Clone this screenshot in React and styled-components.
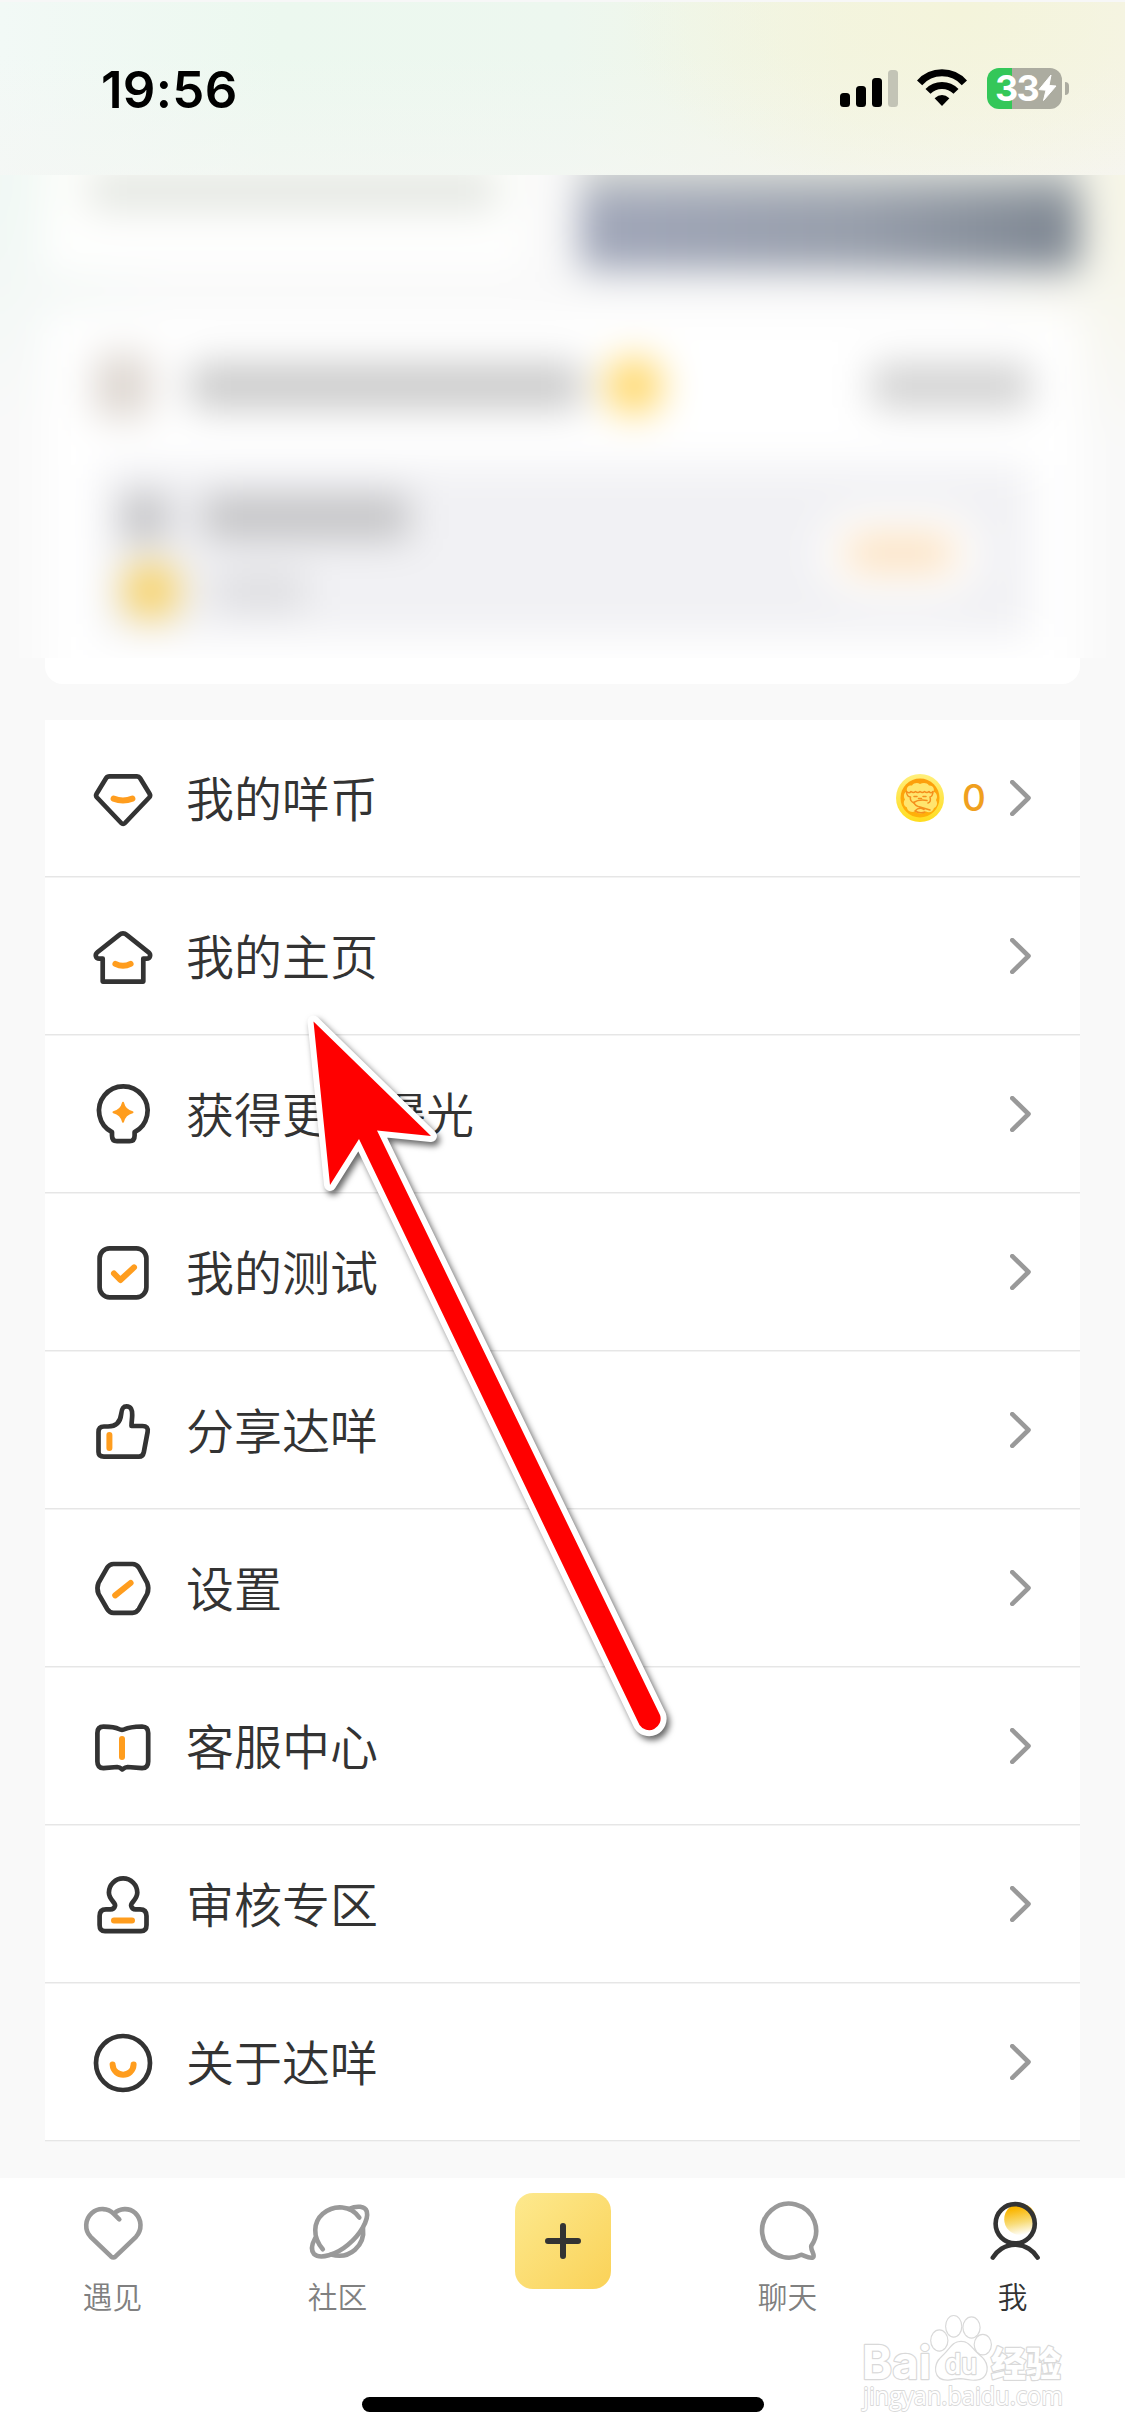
import React from 'react';
import styled, { createGlobalStyle } from 'styled-components';

const palette = {
  ink: '#333333',
  gray: '#999999',
  label: '#808080',
  orange: '#ff9d1e',
  coin: '#f0a01e',
  page: '#f9f9f9',
};

const cjk = "'Noto Sans CJK SC', sans-serif";

const GlobalStyle = createGlobalStyle`
  * {
    box-sizing: border-box;
  }
  body {
    margin: 0;
    background: ${palette.page};
  }
  ul {
    margin: 0;
    padding: 0;
    list-style: none;
  }
  svg {
    display: block;
    flex-shrink: 0;
  }
`;

const Page = styled.div`
  position: relative;
  width: 1125px;
  height: 2436px;
  overflow: hidden;
  display: flex;
  flex-direction: column;
  background: ${palette.page};
  font-family: ${cjk};
  color: ${palette.ink};
`;

/* status bar */

const StatusBar = styled.header`
  height: 175px;
  padding: 2px 56px 0 101px;
  border-top: 2px solid #f7f7f7;
  display: flex;
  align-items: center;
  justify-content: space-between;
  background:
    radial-gradient(ellipse 340px 190px at 960px 10px, #f4f4db 0%, #f4f4db00 100%),
    linear-gradient(180deg, #f6f6f400 30%, #f6f6f490 100%),
    linear-gradient(90deg, #f2f9f6 0%, #ecf8ef 25%, #edf7ef 50%, #f2f5e3 75%, #f6f4e8 100%);
`;

const Clock = styled.div`
  font: 600 51px/60px Inter, sans-serif;
  letter-spacing: 0.3px;
  color: #000;
`;

const StatusIcons = styled.div`
  display: flex;
  align-items: center;
  padding-bottom: 3px;
`;

const Signal = styled.div`
  display: flex;
  align-items: flex-end;
  gap: 6px;
  margin-right: 19px;
`;

const SignalBar = styled.i`
  width: 10px;
  height: ${({ $height }) => $height}px;
  border-radius: 3.5px;
  background: ${({ $off }) => ($off ? '#c3c4b6' : '#000')};
`;

const Battery = styled.div`
  margin-left: 20px;
  width: 75px;
  height: 41px;
  padding-left: 8px;
  border-radius: 12px;
  display: flex;
  align-items: center;
  background: linear-gradient(90deg, #34c759 25px, #acaca0 25px);
  color: #fff;
  font: 700 36px/41px Inter, sans-serif;
  letter-spacing: -1.8px;
`;

const BatteryCap = styled.i`
  width: 4px;
  height: 13px;
  margin-left: 3px;
  border-radius: 0 6px 6px 0;
  background: #acaca0;
`;

/* blurred promo area */

const Frosted = styled.section`
  height: 483px;
  overflow: hidden;
`;

const FrostedInner = styled.div`
  height: 603px;
  margin: -60px;
  padding: 0 105px;
  filter: blur(19px);
  background:
    radial-gradient(ellipse 260px 260px at 0 60px, #eef8f3 0%, #eef8f300 100%),
    radial-gradient(ellipse 260px 280px at 100% 60px, #f5f4e2 0%, #f5f4e200 100%),
    ${palette.page};
`;

const PromoRow = styled.div`
  height: 155px;
  display: flex;
  justify-content: space-between;
`;

const PromoText = styled.div`
  width: 480px;
  padding: 58px 0 0 45px;
  background: linear-gradient(180deg, #fbfdf8, #ffffff);
`;

const PromoBanner = styled.div`
  width: 500px;
  background:
    linear-gradient(180deg, #e4e6df 0 50px, #e4e6df00 88px),
    linear-gradient(90deg, #a0a6b9, #979eab 55%, #7c8590);
`;

const TaskCard = styled.div`
  height: 448px;
  margin-top: 44px;
  padding: 47px 50px 0 50px;
  background: #fff;
`;

const TaskHead = styled.div`
  height: 50px;
  display: flex;
  align-items: center;
`;

const TaskBody = styled.div`
  height: 172px;
  margin: 54px 0 0 6px;
  padding: 15px 50px 0 22px;
  display: flex;
  justify-content: space-between;
  background: #f1f1f4;
`;

const TaskLine = styled.div`
  height: 74px;
  display: flex;
  align-items: center;
  gap: 36px;
`;

const Smudge = styled.div`
  width: ${({ $w }) => $w}px;
  height: ${({ $h }) => $h}px;
  margin-left: ${({ $left }) => $left || 0};
  border-radius: ${({ $round }) => ($round ? '50%' : '4px')};
  background: ${({ $color }) => $color};
`;

const TaskButton = styled.div`
  width: 160px;
  height: 84px;
  margin-top: 31px;
  display: flex;
  align-items: center;
  justify-content: center;
  border-radius: 42px;
  background: #fff;
`;

const CardFoot = styled.div`
  height: 26px;
  margin: 0 45px;
  border-radius: 0 0 18px 18px;
  background: #fff;
`;

/* menu */

const Menu = styled.ul`
  margin: 36px 45px;
`;

const MenuRow = styled.li`
  height: 158px;
  padding: 0 49px 2px 48px;
  display: flex;
  align-items: center;
  background: #fff;
  box-shadow:
    inset 0 -1px #f3f3f3,
    inset 0 -2px #e6e6e6;

  > svg:first-child {
    margin-top: 2px;
  }
`;

const MenuText = styled.span`
  flex: 1;
  margin-left: 33px;
  padding-bottom: 5px;
  font-size: 48px;
  font-weight: 350;
  line-height: 60px;
`;

const CoinCount = styled.span`
  margin: 0 24px 0 18px;
  color: ${palette.coin};
  font: 500 37px/48px Inter, sans-serif;
`;

/* tab bar */

const TabBar = styled.nav`
  height: 258px;
  display: grid;
  grid-template-columns: repeat(5, 1fr);
  grid-template-rows: 219px 15px;
  justify-items: center;
  background: #fff;
`;

const Tab = styled.div`
  padding-top: 25px;
  display: flex;
  flex-direction: column;
  align-items: center;
  gap: 17px;
  font-size: 29.7px;
  line-height: 32px;
  font-weight: 350;
  color: ${({ $active }) => ($active ? palette.ink : palette.label)};
`;

const PlusButton = styled.div`
  width: 96px;
  height: 96px;
  margin-top: 15px;
  border-radius: 18px;
  display: flex;
  align-items: center;
  justify-content: center;
  background: linear-gradient(135deg, #fde98e, #fad258);
`;

const HomeIndicator = styled.div`
  grid-column: 1 / -1;
  width: 402px;
  height: 15px;
  border-radius: 8px;
  background: #000;
`;

/* overlays */

const ArrowSvg = styled.svg`
  position: absolute;
  left: 290px;
  top: 1000px;
  filter: drop-shadow(3px 4px 3px rgba(0, 0, 0, 0.6));
`;

const Watermark = styled.svg`
  position: absolute;
  left: 855px;
  top: 2308px;
`;

const Icon = ({ children, color = palette.ink, width = 4.7 }) => (
  <svg
    width="60"
    height="60"
    viewBox="0 0 60 60"
    fill="none"
    stroke={color}
    strokeWidth={width}
    strokeLinecap="round"
    strokeLinejoin="round"
    overflow="visible"
  >
    {children}
  </svg>
);

const Accent = ({ d }) => <path d={d} stroke={palette.orange} strokeWidth="6" />;

const icons = {
  diamond: (
    <Icon>
      <path d="M16.5 7.3H44Q46 7.3 47 9L56.6 24.7Q57.8 26.6 56.2 28.5L32 54Q30.1 56 28.2 54L4 28.5Q2.4 26.6 3.6 24.7L13.2 9Q14.2 7.3 16.5 7.3Z" />
      <Accent d="M20.6 29.6Q30 33.4 39.4 29.6" />
    </Icon>
  ),
  house: (
    <Icon>
      <path d="M9.7 31.6H6.3C2.6 31.6 1.6 27.6 4.4 25.3L26 8.1C28.5 6 31.5 6 34 8.1L55.6 25.3C58.3 27.6 57.2 31.6 53.7 31.6H50.3V54.6H9.7Z" />
      <Accent d="M22.4 36.9Q30 40.8 37.6 36.9" />
    </Icon>
  ),
  bulb: (
    <Icon>
      <path d="M19 47.2A24.3 24.3 0 1 1 41.6 47.2V50.5Q41.6 56.2 36.5 56.2H24Q19 56.2 19 50.5Z" />
      <path
        d="M30 17.8Q31.8 25.5 39.5 27.3Q31.8 29.1 30 36.8Q28.2 29.1 20.5 27.3Q28.2 25.5 30 17.8Z"
        fill={palette.orange}
        stroke={palette.orange}
        strokeWidth="2"
      />
    </Icon>
  ),
  check: (
    <Icon>
      <rect x="6.6" y="5.3" width="46.8" height="49" rx="10" />
      <Accent d="M21 30.5L27.4 37L41 24.4" />
    </Icon>
  ),
  thumb: (
    <Icon>
      <path d="M5.5 31Q5.5 25.5 11 25.5H15C24 25.5 27.4 20.5 28.2 13C28.7 8 29.7 5.4 33.5 5.4C38 5.4 39.4 9 39.2 14C39.2 18 38.5 21 38.5 25H49.5Q55.7 25 54.6 31L50.8 51.2Q49.9 55.6 46 55.6H11Q5.5 55.6 5.5 51Z" />
      <Accent d="M16.4 34V47" />
    </Icon>
  ),
  hexagon: (
    <Icon>
      <path d="M20.5 5H39.5Q43.5 5 45.9 8.6L54.2 23.8Q56.4 29.3 54.2 34.8L45.9 50Q43.5 53.8 39.5 53.8H20.5Q16.5 53.8 14.2 50L5.5 34.8Q3.3 29.3 5.5 23.8L14.2 8.6Q16.5 5 20.5 5Z" />
      <Accent d="M22.2 36.4L37.6 24" />
    </Icon>
  ),
  book: (
    <Icon>
      <path d="M4.4 16Q4.4 9.7 10.5 9.7C18 9.7 22 10 25.8 12Q29 13.7 32.2 12C36 10 42 9.7 49 9.5Q55.2 9.7 55.2 16V44.5Q55.2 51 49 51.2L34.5 50Q32.5 50 29.3 52.4Q26.5 50 24.3 50L10.5 51.2Q4.4 51 4.4 44.5Z" />
      <Accent d="M29 22V40" />
    </Icon>
  ),
  stamp: (
    <Icon>
      <path d="M22 31C23.4 28 15.9 25 15.9 17.6A14.2 14.2 0 0 1 44.3 17.6C44.3 25 36.8 28 38.2 31Q39.2 34.3 42.5 34.3H47Q53.5 34.3 53.5 41V50Q53.5 56.2 48 56.2H12Q6.6 56.2 6.6 50V41Q6.6 34.3 13 34.3H17.5Q21 34.3 22 31Z" />
      <Accent d="M21 45.4H39" />
    </Icon>
  ),
  smile: (
    <Icon>
      <circle cx="30" cy="30" r="27" />
      <Accent d="M19.6 31.6C20.5 45 39.9 45 40.6 31.6" />
    </Icon>
  ),
};

const Chevron = () => (
  <svg width="21" height="36" viewBox="0 0 21 36" fill="none">
    <path
      d="M2.3 2.2L18.5 18L2.3 33.8"
      stroke={palette.gray}
      strokeWidth="4.6"
      strokeLinecap="round"
      strokeLinejoin="round"
    />
  </svg>
);

const Coin = () => (
  <svg width="48" height="48" viewBox="0 0 48 48">
    <defs>
      <linearGradient id="coinRim" x1="0" y1="0" x2="0" y2="1">
        <stop offset="0" stopColor="#ffef7c" />
        <stop offset="1" stopColor="#ffdc1e" />
      </linearGradient>
      <linearGradient id="coinFace" x1="0" y1="0" x2="0" y2="1">
        <stop offset="0" stopColor="#fc9d0c" />
        <stop offset="1" stopColor="#ffb10a" />
      </linearGradient>
    </defs>
    <circle cx="24" cy="24" r="24" fill="url(#coinRim)" />
    <circle cx="24" cy="24" r="19.5" fill="url(#coinFace)" />
    {/* fleece */}
    <path
      d="M11 17C10 13 13 11 16 11.5C18 8.5 22 8.5 24 10C27 8.5 31 8.5 33 11.5C36 11 39 14 37.5 17.5C41 19 42 23 40 26C42 29 41 33 38 34C37 38 33 39 30 37.5C27 40 21 40 19 37.5C14 39 11 36 11 33.5C7.5 32 7 28 9 25.5C7 22 8 18.5 11 17Z"
      fill="#ffe56e"
    />
    <g fill="none" stroke="#f58f1c" strokeWidth="1.5" strokeLinecap="round" strokeLinejoin="round">
      <path d="M10.5 17.5Q13 20 15 17.5Q17.5 19.5 19.5 17.5Q22 19.5 24 17.5Q26.5 19.5 28.5 17.5Q31 19.5 33 17.5Q35 20 37 17.5" />
      <path d="M10.5 18Q11 23 14.5 23Q13.5 27 18 29M37 18Q36.5 22.5 34 23Q35.5 28 32 29" />
      <path d="M18 22.5H21M27 22.5H30M22.5 24.5H25.5" />
      <path d="M17.5 28.5Q23 25 31 26.5M18 28.5Q19 32 24 33L34 36M19 37Q23 32.5 28 35.5M19 37Q24 40 29 38" />
    </g>
  </svg>
);

const menuItems = [
  { icon: 'diamond', text: '我的咩币', coins: 0 },
  { icon: 'house', text: '我的主页' },
  { icon: 'bulb', text: '获得更多曝光' },
  { icon: 'check', text: '我的测试' },
  { icon: 'thumb', text: '分享达咩' },
  { icon: 'hexagon', text: '设置' },
  { icon: 'book', text: '客服中心' },
  { icon: 'stamp', text: '审核专区' },
  { icon: 'smile', text: '关于达咩' },
];

const Status = () => (
  <StatusBar>
    <Clock>19:56</Clock>
    <StatusIcons>
      <Signal>
        <SignalBar $height={14} />
        <SignalBar $height={21} />
        <SignalBar $height={29} />
        <SignalBar $height={37} $off />
      </Signal>
      <svg width="50" height="38" viewBox="0 0 50 38" fill="none" stroke="#000" strokeWidth="7">
        <path d="M2.6 13.8A30 30 0 0 1 47.4 13.8" />
        <path d="M11 22.4A19.5 19.5 0 0 1 39 22.4" />
        <path d="M17.6 29.2Q25 23 32.4 29.2L25 37Z" fill="#000" stroke="none" />
      </svg>
      <Battery>
        33
        <svg width="19" height="28" viewBox="0 0 19 28" fill="#fff" stroke="#fff" strokeLinejoin="round">
          <path d="M13 1L1 15.6L8 16.2L5.5 26.5L18 12L11 11.4Z" />
        </svg>
      </Battery>
      <BatteryCap />
    </StatusIcons>
  </StatusBar>
);

const Promo = () => (
  <>
    <Frosted>
      <FrostedInner>
        <PromoRow>
          <PromoText>
            <Smudge $w={405} $h={36} $color="#e2e5e0" />
          </PromoText>
          <PromoBanner />
        </PromoRow>
        <TaskCard>
          <TaskHead>
            <Smudge $w={56} $h={64} $color="#ddd6d0" />
            <Smudge $w={392} $h={46} $left="39px" $color="#c9c9c9" />
            <Smudge $w={56} $h={56} $left="24px" $round $color="#ffd45c" />
            <Smudge $w={158} $h={44} $left="auto" $color="#d0d0d0" />
          </TaskHead>
          <TaskBody>
            <div>
              <TaskLine>
                <Smudge $w={44} $h={44} $color="#bdbdbf" />
                <Smudge $w={206} $h={44} $color="#c2c2c4" />
              </TaskLine>
              <TaskLine>
                <Smudge $w={56} $h={56} $round $color="#f8d05c" />
                <Smudge $w={90} $h={36} $color="#dcdcdf" />
              </TaskLine>
            </div>
            <TaskButton>
              <Smudge $w={106} $h={38} $color="#fbe1c0" />
            </TaskButton>
          </TaskBody>
        </TaskCard>
      </FrostedInner>
    </Frosted>
    <CardFoot />
  </>
);

const Tabs = () => (
  <TabBar>
    <Tab>
      <Icon color={palette.gray} width={4.6}>
        <path d="M36.3 16.3L30.8 10.8C25 4.9 15.2 4.4 8.9 10C1.7 16.5 1.4 27 7.6 33.8L28 53.4Q30.3 55.4 32.6 53.4L53 33.8C59.2 27 59 16.5 52.2 10C46 4.6 37 4.9 30.8 10.8" />
      </Icon>
      遇见
    </Tab>
    <Tab>
      <Icon color={palette.gray} width={4.6}>
        <path d="M14.8 46.2C4 33.5 5.5 19 14.8 10.8C26.5 1 43 2.5 51.3 14.5" />
        <path d="M55 25C57.2 42 42 57 23.3 51.5" />
        <path d="M41.2 5.8C49 2.4 57 3 58.8 8.5C61 17 52 32 40 41.8C28 52 12 56.5 6 51C2.6 47 4 41 7 35.5" />
      </Icon>
      社区
    </Tab>
    <PlusButton>
      <svg width="36" height="36" viewBox="0 0 36 36" stroke={palette.ink} strokeWidth="6" strokeLinecap="round">
        <path d="M18 3V33M3 18H33" />
      </svg>
    </PlusButton>
    <Tab>
      <Icon color={palette.gray} width={4.6}>
        <path d="M43.2 51.7A27 27 0 1 1 53.3 42.9C52.2 47 57.8 52.6 55 54.4C52 56 47.5 53.2 43.2 51.7Z" />
      </Icon>
      聊天
    </Tab>
    <Tab $active>
      <Icon width={4.6}>
        <defs>
          <linearGradient id="face" x1="0.4" y1="0" x2="0.6" y2="1">
            <stop offset="0.15" stopColor="#fbb600" />
            <stop offset="0.6" stopColor="#f8dc78" />
            <stop offset="1" stopColor="#ffffff" />
          </linearGradient>
        </defs>
        <circle cx="37" cy="16.2" r="15.8" fill="url(#face)" stroke="none" />
        <circle cx="32.2" cy="20.7" r="19.6" />
        <path d="M9.8 54.6A26 26 0 0 1 54.6 54.6" />
      </Icon>
      我
    </Tab>
    <HomeIndicator />
  </TabBar>
);

const PointerArrow = () => (
  <ArrowSvg width="400" height="750" viewBox="0 0 400 750">
    <path
      d="M23.5 21.5L141 136L87 130.5L370 715A11.5 11.5 0 0 1 349.5 725L69 139L40 185Z"
      fill="#ff0000"
      stroke="#ffffff"
      strokeWidth="12"
      strokeLinejoin="round"
      paintOrder="stroke"
    />
  </ArrowSvg>
);

const BaiduMark = () => (
  <Watermark
    width="220"
    height="115"
    viewBox="0 0 220 115"
    fill="#ffffff"
    stroke="#d9d9d9"
    strokeWidth="2.4"
    strokeLinejoin="round"
    paintOrder="stroke"
  >
    <text x="7" y="71" fontFamily="Inter, sans-serif" fontWeight="700" fontSize="46" textLength="69" lengthAdjust="spacingAndGlyphs">
      Bai
    </text>
    <ellipse cx="84.3" cy="32.5" rx="8" ry="10" />
    <ellipse cx="98.7" cy="18.3" rx="7.5" ry="10.2" />
    <ellipse cx="116.5" cy="19.5" rx="8" ry="10" />
    <ellipse cx="127.8" cy="36.6" rx="8" ry="9.7" />
    <path d="M106 34C97 34 95 42 87 49C78 57 79 72 93 71.5C99 71 100 70 106 70C113 71 116 72 121 71.5C133 71 135 57 126 49C117 42 115 34 106 34Z" />
    <text x="90" y="66" fontFamily="Inter, sans-serif" fontWeight="600" fontSize="28" textLength="32" lengthAdjust="spacingAndGlyphs">
      du
    </text>
    <text x="136" y="69" fontFamily={cjk} fontWeight="900" fontSize="35">
      经验
    </text>
    <text x="8" y="97" strokeWidth="1.8" fontFamily="'Open Sans', sans-serif" fontWeight="500" fontSize="25" textLength="200" lengthAdjust="spacingAndGlyphs">
      jingyan.baidu.com
    </text>
  </Watermark>
);

const App = () => {
  return (
    <Page>
      <GlobalStyle />
      <Status />
      <Promo />
      <Menu>
        {menuItems.map(({ icon, text, coins }) => (
          <MenuRow key={text}>
            {icons[icon]}
            <MenuText>{text}</MenuText>
            {coins !== undefined && (
              <>
                <Coin />
                <CoinCount>{coins}</CoinCount>
              </>
            )}
            <Chevron />
          </MenuRow>
        ))}
      </Menu>
      <Tabs />
      <PointerArrow />
      <BaiduMark />
    </Page>
  );
};

export default App;
